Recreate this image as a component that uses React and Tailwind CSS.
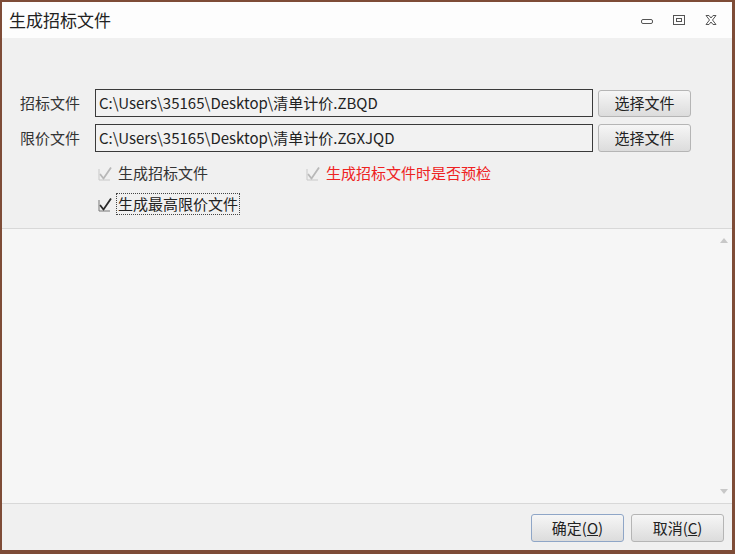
import React from "react";

const font = { fontFamily: '"Microsoft YaHei","Noto Sans CJK SC","Noto Sans",sans-serif' };

function Check({ disabled }) {
  return (
    <span className="relative inline-block w-[15px] h-[15px]">
      <svg width="15" height="15" viewBox="0 0 15 15" className="absolute left-0 top-0">
        <path d="M2 8 L5.5 12.5 L13 1.5" fill="none" stroke={disabled ? "#b8b8b8" : "#2a2a2a"} strokeWidth="1.8" />
        <path d="M1 3 V14 H12" fill="none" stroke={disabled ? "#c8c8c8" : "#777"} strokeWidth="1" />
      </svg>
    </span>
  );
}

function Btn({ children, w = "w-[93px]", h = "h-[28px]", primary }) {
  return (
    <div
      className={`${w} ${h} flex items-center justify-center rounded-[3px] border ${primary ? "border-[#8fa6c7]" : "border-[#b5b5b5]"} bg-gradient-to-b from-[#f6f6f6] to-[#dcdcdc] text-[15px] text-[#222]`}
    >
      {children}
    </div>
  );
}

export default function App() {
  return (
    <div className="w-[735px] h-[554px] bg-[#7e4c37] pl-[2px] pr-[3px] pt-[2px] pb-[4px]" style={font}>
      <div className="w-full h-full flex flex-col bg-[#f0f0f0]">
        {/* title bar */}
        <div className="h-[36px] bg-[#fdfdfd] flex items-center pl-[7px] pr-[14px] shrink-0">
          <span className="text-[17px] text-[#222]">生成招标文件</span>
          <div className="ml-auto flex items-center gap-[18px] text-[#555]">
            <svg width="14" height="10" viewBox="0 0 14 10"><rect x="1.5" y="4.5" width="11" height="4" rx="1.5" fill="none" stroke="#555" strokeWidth="1"/></svg>
            <svg width="14" height="12" viewBox="0 0 14 12"><rect x="1.5" y="1.5" width="11" height="9" fill="none" stroke="#555" strokeWidth="1"/><rect x="4.5" y="4.5" width="5" height="3" fill="none" stroke="#555" strokeWidth="1"/></svg>
            <svg width="14" height="12" viewBox="0 0 14 12"><path d="M2 1.5 L5 1.5 L7 4 L9 1.5 L12 1.5 L8.5 6 L12 10.5 L9 10.5 L7 8 L5 10.5 L2 10.5 L5.5 6 Z" fill="none" stroke="#555" strokeWidth="1"/></svg>
          </div>
        </div>
        {/* form */}
        <div className="h-[190px] shrink-0 pt-[51px] pl-[18px]">
          <div className="flex items-center h-[28px]">
            <span className="w-[75px] text-[15px] text-[#333]">招标文件</span>
            <div className="w-[498px] h-[28px] border border-[#3a3a3a] bg-[#f2f2f2] flex items-center pl-[3px] text-[15px] text-[#222] whitespace-nowrap overflow-hidden">
              C:\Users\35165\Desktop\清单计价.ZBQD
            </div>
            <div className="ml-[5px]"><Btn h="h-[27px]">选择文件</Btn></div>
          </div>
          <div className="flex items-center h-[28px] mt-[7px]">
            <span className="w-[75px] text-[15px] text-[#333]">限价文件</span>
            <div className="w-[498px] h-[28px] border border-[#3a3a3a] bg-[#f2f2f2] flex items-center pl-[3px] text-[15px] text-[#222] whitespace-nowrap overflow-hidden">
              C:\Users\35165\Desktop\清单计价.ZGXJQD
            </div>
            <div className="ml-[5px]"><Btn>选择文件</Btn></div>
          </div>
          <div className="flex items-center mt-[11px] pl-[78px] h-[20px]">
            <div className="w-[208px] flex items-center gap-[5px]">
              <Check disabled />
              <span className="text-[15px] text-[#333]">生成招标文件</span>
            </div>
            <div className="flex items-center gap-[5px]">
              <Check disabled />
              <span className="text-[15px] text-[#ee2222]">生成招标文件时是否预检</span>
            </div>
          </div>
          <div className="flex items-center mt-[10px] pl-[78px] h-[22px] gap-[3px]">
            <Check />
            <span className="text-[15px] text-[#222] border border-dotted border-[#444] px-[1px] leading-[20px]">生成最高限价文件</span>
          </div>
        </div>
        {/* memo */}
        <div className="flex-1 border-t border-b border-[#d8d8d8] bg-[#f6f6f6] relative flex">
          <div className="ml-auto w-[16px] flex flex-col items-center justify-between py-[9px]">
            <svg width="8" height="5" viewBox="0 0 8 5"><path d="M0 5 L4 0 L8 5 Z" fill="#c8c8c8"/></svg>
            <svg width="8" height="5" viewBox="0 0 8 5"><path d="M0 0 L4 5 L8 0 Z" fill="#c8c8c8"/></svg>
          </div>
        </div>
        {/* bottom */}
        <div className="h-[46px] shrink-0 flex items-center justify-end gap-[7px] pr-[8px] pt-[2px]">
          <Btn primary>确定(<span className="underline">O</span>)</Btn>
          <Btn>取消(<span className="underline">C</span>)</Btn>
        </div>
      </div>
    </div>
  );
}
